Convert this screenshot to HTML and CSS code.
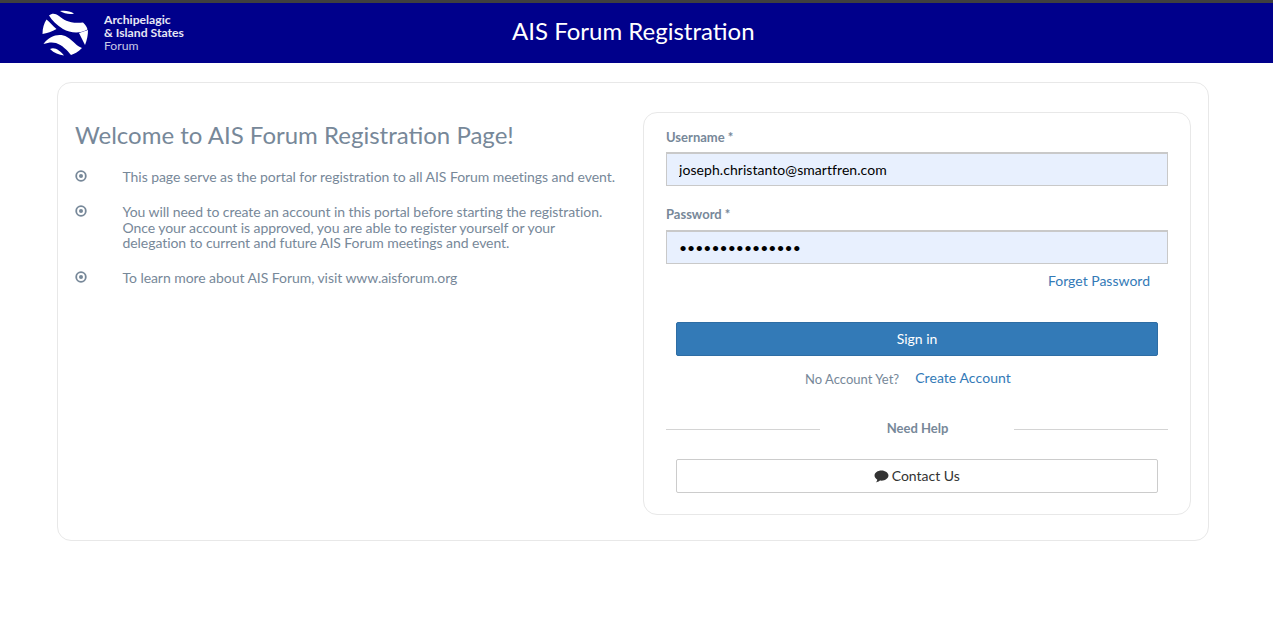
FILE: index.html
```html
<!DOCTYPE html>
<html lang="en">
<head>
<meta charset="utf-8">
<title>AIS Forum Registration</title>
<link rel="stylesheet" href="styles.css">
</head>
<body>
<header class="topbar">
  <div class="brand">
    <svg class="brand-mark" viewBox="0 0 46 46" aria-hidden="true">
      <path d="M18 1C23 .2 28 1 32 3.500C28 5 22 3.500 18 1Z" fill="#fff"/>
      <path d="M7 5.500C10 3 13 3 17 6C22 10 28 14 41 12.500C43.500 15 45 17 45.500 19.500C38 24 28 23 21 19C15 15 10 11 7 5.500Z" fill="#fff"/>
      <path d="M4.500 9.500C8 12.500 11 16 14.500 19C10 21.500 5 23.500 .5 24C.5 18 2 13.500 4.500 9.500Z" fill="#fff"/>
      <path d="M1.500 34C8 25 18 23 25 27C32 31 34 36 40 38C36 42 32 44 29 45C25 40 20 35 14 33C10 32 6 32.500 1.500 34Z" fill="#fff"/>
      <path d="M37 23L46 20C46 25 45 30 43 35C41 31 39 27 37 23Z" fill="#fff"/>
      <path d="M8 39C13 36.500 18 41 22 45.500C17 45 12 43 8 39Z" fill="#fff"/>
    </svg>
    <div class="brand-text">
      <span class="brand-strong">Archipelagic</span>
      <span class="brand-strong">&amp; Island States</span>
      <span class="brand-light">Forum</span>
    </div>
  </div>
  <h1 class="page-title">AIS Forum Registration</h1>
</header>

<main class="card">
  <section class="intro">
    <h2 class="intro-title">Welcome to AIS Forum Registration Page!</h2>
    <ul class="points">
      <li class="point">
        <svg class="bullet" viewBox="0 0 12 12" aria-hidden="true"><circle cx="6" cy="6" r="4.800" fill="none" stroke="#778899" stroke-width="1.800"/><circle cx="6" cy="6" r="2" fill="#778899"/></svg>
        <p>This page serve as the portal for registration to all AIS Forum meetings and event.</p>
      </li>
      <li class="point">
        <svg class="bullet" viewBox="0 0 12 12" aria-hidden="true"><circle cx="6" cy="6" r="4.800" fill="none" stroke="#778899" stroke-width="1.800"/><circle cx="6" cy="6" r="2" fill="#778899"/></svg>
        <p>You will need to create an account in this portal before starting the registration. Once your account is approved, you are able to register yourself or your delegation to current and future AIS Forum meetings and event.</p>
      </li>
      <li class="point">
        <svg class="bullet" viewBox="0 0 12 12" aria-hidden="true"><circle cx="6" cy="6" r="4.800" fill="none" stroke="#778899" stroke-width="1.800"/><circle cx="6" cy="6" r="2" fill="#778899"/></svg>
        <p>To learn more about AIS Forum, visit www.aisforum.org</p>
      </li>
    </ul>
  </section>

  <form class="login">
    <label class="field-label" for="username">Username *</label>
    <input class="field-input" id="username" type="text" value="joseph.christanto@smartfren.com">
    <label class="field-label field-label-second" for="password">Password *</label>
    <input class="field-input field-password" id="password" type="password" value="aaaaaaaaaaaaaaa">
    <div class="forgot"><a href="#">Forget Password</a></div>
    <div class="actions">
      <button class="btn btn-primary" type="button">Sign in</button>
    </div>
    <div class="signup"><span class="signup-note">No Account Yet?</span><a class="signup-link" href="#">Create Account</a></div>
    <div class="divider"><span class="rule"></span><span class="divider-text">Need Help</span><span class="rule"></span></div>
    <div class="actions">
      <button class="btn btn-default" type="button">
        <svg class="chat" viewBox="0 0 16 14" aria-hidden="true"><path d="M8 .5C3.900 .5.500 2.900.500 6c0 1.800 1.200 3.400 3 4.400-.2 1.100-.8 2.100-1.600 3 1.600-.2 3.200-1 4.400-2 .6.1 1.100.1 1.700.1 4.100 0 7.500-2.500 7.500-5.500S12.100.5 8 .5Z" fill="#333"/></svg>
        <span class="btn-label">Contact Us</span>
      </button>
    </div>
  </form>
</main>
</body>
</html>
```
FILE: styles.css
```css
* { box-sizing: border-box; }

html, body { margin: 0; padding: 0; }

body {
  height: 618px;
  overflow: hidden;
  background: #fff;
  font-family: Lato, "Liberation Sans", sans-serif;
  font-size: 14px;
  color: #333;
}

.topbar {
  display: flex;
  align-items: center;
  height: 63px;
  border-top: 3px solid #3f3f3f;
  background: #00008b;
  color: #fff;
  padding-left: 43px;
}

.brand {
  display: flex;
  align-items: center;
  gap: 16px;
  width: 469px;
  flex: none;
}

.brand-mark { width: 46px; height: 46px; flex: none; margin-left: -1px; }

.brand-text {
  display: flex;
  flex-direction: column;
  padding-bottom: 2px;
  font-size: 12.200px;
  line-height: 13px;
  color: #e6e6f4;
}

.brand-strong { font-weight: 700; }

.brand-light { color: #c8c8e6; }

.page-title {
  margin: 0 0 6px;
  font-family: Lato, sans-serif;
  font-size: 24px;
  font-weight: 400;
  color: #fff;
}

.card {
  display: flex;
  justify-content: space-between;
  width: 1152px;
  height: 459px;
  margin: 19px 0 0 57px;
  padding: 29px 17px 0;
  border: 1px solid #e8e8e8;
  border-radius: 14px;
}

.intro { width: 545px; color: #778899; }

.intro-title {
  margin: 8px 0 0;
  font-size: 24px;
  line-height: 30px;
  font-weight: 400;
}

.points { list-style: none; margin: 19px 0 0; padding: 0; }

.point { display: flex; margin-bottom: 19.500px; }

.point p {
  margin: 0;
  font-size: 14px;
  line-height: 15.500px;
  width: 500px;
  letter-spacing: -.06px;
}

.bullet { width: 12px; height: 12px; flex: none; margin: 1px 36px 0 -.5px; }

.login {
  width: 548px;
  height: 403px;
  padding: 16px 22px 0;
  border: 1px solid #e8e8e8;
  border-radius: 14px;
}

.field-label {
  display: block;
  font-size: 13px;
  line-height: 16px;
  font-weight: 700;
  color: #778899;
}

.field-label-second { margin-top: 20px; }

.field-input {
  display: block;
  width: 100%;
  height: 34px;
  margin-top: 7px;
  padding: 0 12px;
  border: 2px solid #c9c9c9;
  border-width: 2px 1px 1px;
  background: #e8f0fe;
  font-family: Lato, sans-serif;
  font-size: 14px;
  letter-spacing: .06px;
  color: #000;
  outline: 0;
  border-radius: 0;
}

.field-password { margin-top: 8px; letter-spacing: 0; }

.forgot {
  height: 18px;
  margin-top: 8px;
  padding-right: 18px;
  text-align: right;
  line-height: 18px;
}

a { color: #337ab7; text-decoration: none; }

.actions { padding: 0 10px; }

.btn {
  display: block;
  width: 100%;
  height: 34px;
  padding: 0 0 2px;
  border-radius: 2px;
  font-family: Lato, sans-serif;
  font-size: 14px;
  cursor: pointer;
}

.btn-primary {
  margin-top: 32px;
  background: #337ab7;
  border: 1px solid #2e6da4;
  color: #fff;
}

.btn-default {
  margin-top: 20px;
  background: #fff;
  border: 1px solid #ccc;
  color: #333;
}

.btn-label { margin-left: -1px; }

.chat { width: 15px; height: 13px; vertical-align: -2px; }

.signup {
  display: flex;
  justify-content: center;
  gap: 16px;
  margin-top: 13px;
  height: 18px;
  padding-right: 18px;
  line-height: 18px;
  font-size: 14px;
}

.signup-link { letter-spacing: .07px; }

.signup-note { font-size: 13px; color: #778899; position: relative; top: 1px; }

.divider {
  display: flex;
  align-items: center;
  height: 20px;
  margin-top: 32px;
}

.rule { height: 1px; background: #d4d4d4; flex: none; width: 154px; }

.divider-text {
  flex: 1;
  padding: 0 0 2px 1px;
  text-align: center;
  font-size: 13px;
  font-weight: 700;
  color: #778899;
}
```
